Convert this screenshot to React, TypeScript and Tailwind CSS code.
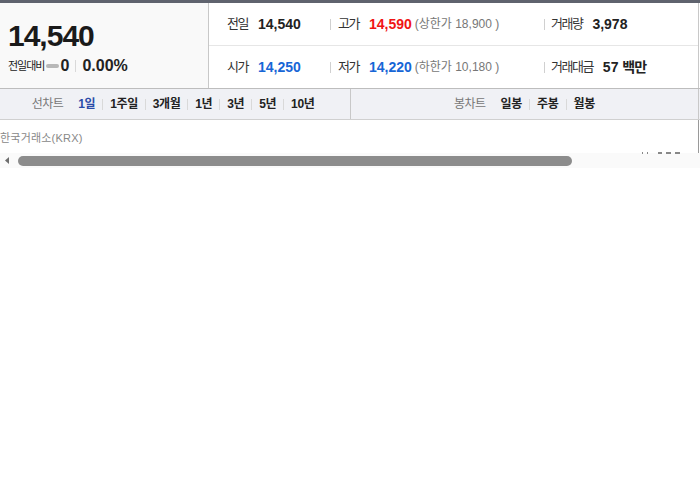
import { Fragment } from 'react';

const font = { fontFamily: '"Liberation Sans", Arial, "Noto Sans CJK KR", sans-serif' };

function Sep() {
  return <span className="inline-block w-px h-[11px] bg-[#d9d9d9] mx-[7px]" />;
}

export default function App() {
  const lineTabs = ['1일', '1주일', '3개월', '1년', '3년', '5년', '10년'];
  const candleTabs = ['일봉', '주봉', '월봉'];

  return (
    <div className="w-[700px] h-[490px] bg-white text-[#222] overflow-hidden" style={font}>
      <div className="border-t-[3px] border-[#5f636e] border-b border-b-[#bdbdbd] flex h-[89px]">
        <div className="w-[209px] bg-[#f9f9f9] border-r border-[#c8c8c8] pl-2 pt-[17px]">
          <div className="text-[30px] font-bold leading-[32px] tracking-[-1px] text-[#1a1a1a]">14,540</div>
          <div className="flex items-center mt-[5px] h-[18px]">
            <span className="text-[11px] tracking-[-1px] text-[#222]">전일대비</span>
            <span className="inline-block w-[13px] h-[4px] bg-[#b8b8b8] rounded-sm ml-[2px] mr-[1px]" />
            <span className="text-[16px] font-bold">0</span>
            <span className="inline-block w-px h-[12px] bg-[#d9d9d9] mx-[6px]" />
            <span className="text-[16px] font-bold">0.00%</span>
          </div>
        </div>
        <div className="flex-1 border-r border-[#c8c8c8] mr-[1px] flex flex-col">
          <div className="h-[43px] border-b border-[#e6e6e6] flex items-center text-[14px]">
            <div className="w-[121px] pl-[18px] flex items-center">
              <span className="text-[13px] tracking-[-1.5px] text-[#333]">전일</span>
              <span className="font-bold ml-[10px]">14,540</span>
            </div>
            <div className="w-[214px] flex items-center">
              <span className="inline-block w-px h-[11px] bg-[#d0d0d0] mr-[7px]" />
              <span className="text-[13px] tracking-[-1.5px] text-[#333]">고가</span>
              <span className="font-bold ml-[10px] text-[#f01414]">14,590</span>
              <span className="text-[12px] text-[#777] ml-[3px]">(상한가 18,900 )</span>
            </div>
            <div className="flex items-center">
              <span className="inline-block w-px h-[11px] bg-[#d0d0d0] mr-[6px]" />
              <span className="text-[13px] tracking-[-1.5px] text-[#333]">거래량</span>
              <span className="font-bold ml-[10px]">3,978</span>
            </div>
          </div>
          <div className="flex-1 flex items-center text-[14px]">
            <div className="w-[121px] pl-[18px] flex items-center">
              <span className="text-[13px] tracking-[-1.5px] text-[#333]">시가</span>
              <span className="font-bold ml-[10px] text-[#1766d6]">14,250</span>
            </div>
            <div className="w-[214px] flex items-center">
              <span className="inline-block w-px h-[11px] bg-[#d0d0d0] mr-[7px]" />
              <span className="text-[13px] tracking-[-1.5px] text-[#333]">저가</span>
              <span className="font-bold ml-[10px] text-[#1766d6]">14,220</span>
              <span className="text-[12px] text-[#777] ml-[3px]">(하한가 10,180 )</span>
            </div>
            <div className="flex items-center">
              <span className="inline-block w-px h-[11px] bg-[#d0d0d0] mr-[6px]" />
              <span className="text-[13px] tracking-[-1.5px] text-[#333]">거래대금</span>
              <span className="font-bold ml-[10px]">57 <span className="tracking-[-1px]">백만</span></span>
            </div>
          </div>
        </div>
      </div>

      <div className="flex h-[31px] bg-[#f0f1f5] border-b border-[#d0d0d0] text-[12px]">
        <div className="w-[351px] border-r border-[#c8c8c8] flex items-center justify-center pr-[4px]">
          <span className="text-[#777] tracking-[-0.5px] mr-[15px]">선차트</span>
          {lineTabs.map((t, i) => (
            <Fragment key={t}>
              {i > 0 && <Sep />}
              <span className={`font-bold tracking-[-0.4px] ${i === 0 ? 'text-[#2b4ba8]' : 'text-[#222]'}`}>{t}</span>
            </Fragment>
          ))}
        </div>
        <div className="w-[348px] border-r border-[#c8c8c8] flex items-center justify-center">
          <span className="text-[#777] tracking-[-0.5px] mr-[15px]">봉차트</span>
          {candleTabs.map((t, i) => (
            <Fragment key={t}>
              {i > 0 && <Sep />}
              <span className="font-bold tracking-[-0.3px] text-[#222]">{t}</span>
            </Fragment>
          ))}
        </div>
      </div>

      <div className="h-[33px] border-r border-[#9a9a9a] mr-[1px] pt-[12px]">
        <span className="block text-[11px] leading-[12px] text-[#888] tracking-[0.2px]">한국거래소(KRX)</span>
      </div>

      <div className="relative h-[15px] bg-[#fafafa] flex items-center">
        <svg width="14" height="15" viewBox="0 0 14 15" className="shrink-0">
          <path d="M5 7.5 L9 4 L9 11 Z" fill="#6e6e6e" />
        </svg>
        <div className="ml-[4px] w-[554px] h-[10px] rounded-full bg-[#8c8c8c]" />
        <div className="absolute left-[642px] top-[-1px] flex gap-[4px]">
          <span className="w-px h-[2px] bg-[#888]" />
          <span className="w-px h-[2px] bg-[#888]" />
          <span className="w-[4px] h-[2px] bg-[#888] ml-[6px]" />
          <span className="w-[5px] h-[2px] bg-[#888]" />
          <span className="w-[5px] h-[2px] bg-[#888]" />
        </div>
      </div>
    </div>
  );
}
